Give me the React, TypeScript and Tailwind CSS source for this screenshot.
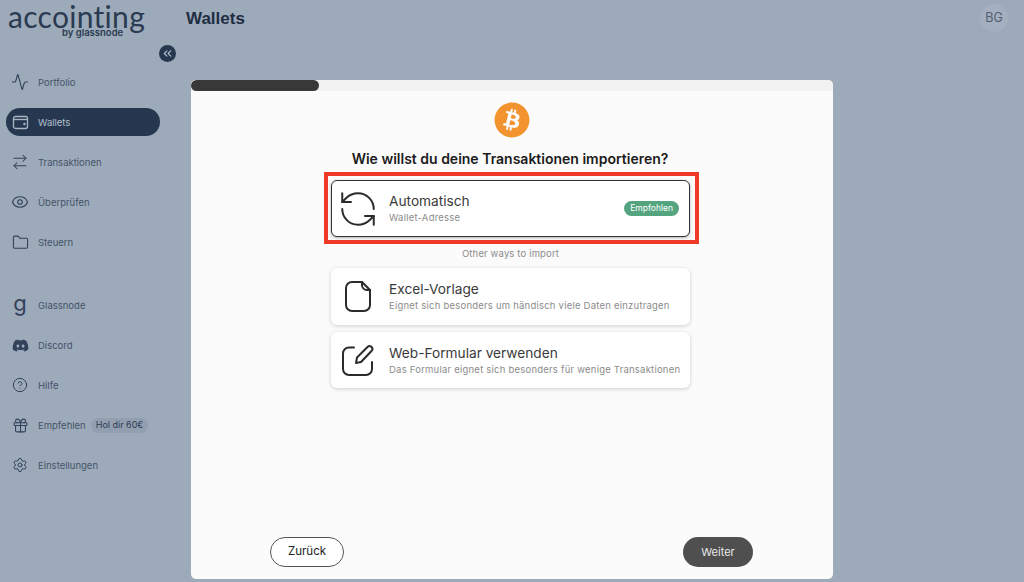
import { Activity, ArrowRightLeft, ChevronsLeft, CircleHelp, Eye, Folder, Gift, RefreshCcw, Settings } from "lucide-react";
import { FaBitcoin, FaDiscord } from "react-icons/fa";
import type { ReactNode } from "react";

function WalletIcon() {
  return (
    <svg width="17" height="17" viewBox="0 0 17 17" fill="none" stroke="currentColor" strokeWidth="1.3">
      <rect x="1.5" y="2.5" width="14" height="12" rx="2" />
      <path d="M1.5 5.5h14" />
      <circle cx="12.5" cy="10" r="0.6" fill="currentColor" />
    </svg>
  );
}

function FileIcon() {
  return (
    <svg width="26" height="31" viewBox="0 0 26 31" fill="none" stroke="currentColor" strokeWidth="2" strokeLinecap="round" strokeLinejoin="round">
      <path d="M7 1h10l8 8v15a6 6 0 0 1-6 6H7a6 6 0 0 1-6-6V7a6 6 0 0 1 6-6z" />
      <path d="M17 1v3a5 5 0 0 0 5 5h3" />
    </svg>
  );
}

function FormIcon() {
  return (
    <svg width="32" height="32" viewBox="0 0 32 32" fill="none" stroke="currentColor" strokeWidth="2" strokeLinecap="round" strokeLinejoin="round">
      <path d="M12 3.500H7a6 6 0 0 0-6 6V25a6 6 0 0 0 6 6h17a6 6 0 0 0 6-6v-7" />
      <path d="M14 19l1-5.500L25.500 3a2.800 2.800 0 0 1 4 4L19 18z" />
    </svg>
  );
}

const topNav = [
  { label: "Portfolio", icon: <Activity size={18} strokeWidth={1.5} /> },
  { label: "Wallets", icon: <WalletIcon />, active: true },
  { label: "Transaktionen", icon: <ArrowRightLeft size={18} strokeWidth={1.4} /> },
  { label: "Überprüfen", icon: <Eye size={18} strokeWidth={1.5} /> },
  { label: "Steuern", icon: <Folder size={17} strokeWidth={1.5} /> },
];

const bottomNav = [
  { label: "Glassnode", icon: <span className="text-[22px] leading-none -mt-[5px]">g</span> },
  { label: "Discord", icon: <FaDiscord size={17} /> },
  { label: "Hilfe", icon: <CircleHelp size={16} strokeWidth={1.5} /> },
  { label: "Empfehlen", icon: <Gift size={17} strokeWidth={1.5} />, badge: "Hol dir 60€" },
  { label: "Einstellungen", icon: <Settings size={16} strokeWidth={1.5} /> },
];

function NavItem({ label, icon, active, badge }: { label: string; icon: ReactNode; active?: boolean; badge?: string }) {
  return (
    <div className={`h-7 flex items-center rounded-full pl-[5px] ${active ? "bg-[#263850] text-[#a9b5c4]" : "text-[#33415a]"}`}>
      <span className="w-[18px] flex justify-center">{icon}</span>
      <span className={`ml-[9px] mt-[2px] text-[9.5px] ${active ? "text-[#b4bfcc]" : "text-[#465369]"}`}>{label}</span>
      {badge && (
        <span className="ml-[5px] h-[15px] px-[5px] flex items-center rounded-full bg-[#929fb1] text-[9px] text-[#2f3d52]">{badge}</span>
      )}
    </div>
  );
}

function Option({ title, text, icon, badge, className }: { title: string; text: string; icon: ReactNode; badge?: string; className?: string }) {
  return (
    <div className={`w-[359px] bg-white rounded-[6px] flex items-center pr-[10px] ${className}`}>
      <span className="w-[32px] flex justify-center text-[#2b2b2b]">{icon}</span>
      <div className="ml-[15px] flex-1 whitespace-nowrap">
        <div className="text-[13.7px] leading-[18px] text-[#3a3a3a]">{title}</div>
        <div className="text-[9.5px] leading-[14px] mt-[1px] text-[#8b8b8b] tracking-[0.22px]">{text}</div>
      </div>
      {badge && (
        <span className="h-[15px] px-[6px] rounded-full bg-[#54a57f] text-white text-[8.5px] flex items-center">{badge}</span>
      )}
    </div>
  );
}

export default function App() {
  return (
    <div className="w-[1024px] h-[582px] overflow-hidden flex bg-[#9caaba] font-['Inter',sans-serif]">
      {/* Sidebar */}
      <aside className="w-[191px] shrink-0 pl-[6px] pr-[31px]">
        <div className="h-[45px] pt-[1px] pl-[2px]">
          <div className="text-[30px] leading-[30px] font-['Lato',sans-serif] text-[#2a3a50] tracking-[0.3px]">accointing</div>
          <div className="-mt-[4px] pl-[54px] text-[9.5px] leading-3 font-semibold text-[#2a3a50]">by glassnode</div>
        </div>
        <div className="flex justify-end h-[17px] -mr-[16px]">
          <span className="w-[17px] h-[17px] rounded-full bg-[#263850] text-[#b4bfcc] flex items-center justify-center">
            <ChevronsLeft size={13} strokeWidth={2} />
          </span>
        </div>
        <nav className="mt-[6px] flex flex-col gap-3">
          {topNav.map((item) => (
            <NavItem key={item.label} {...item} />
          ))}
        </nav>
        <nav className="mt-[35px] flex flex-col gap-3">
          {bottomNav.map((item) => (
            <NavItem key={item.label} {...item} />
          ))}
        </nav>
      </aside>

      {/* Main */}
      <main className="flex-1 flex flex-col min-w-0">
        <header className="h-[80px] shrink-0 flex items-start justify-between pr-[16px]">
          <h1 className="mt-[9px] -ml-[5px] text-[17px] leading-[20px] font-bold text-[#1f2d42] font-['Liberation_Sans',sans-serif]">Wallets</h1>
          <span className="mt-[4px] w-7 h-7 rounded-full bg-[#a4afbf] text-[#536073] text-[12.5px] flex items-center justify-center">BG</span>
        </header>

        <section className="w-[642px] h-[499px] bg-[#fbfbfb] rounded-[5px] overflow-hidden flex flex-col items-center">
          <div className="self-stretch h-[11px] bg-[#f2f2f3] shrink-0">
            <div className="w-[128px] h-[11px] rounded-full bg-[#383838]" />
          </div>
          <FaBitcoin size={36} className="mt-[11px] -ml-[1px] text-[#f2932f]" />
          <h2 className="mt-[11px] -ml-[4px] text-[14px] leading-5 font-semibold text-[#1c1c1c]">Wie willst du deine Transaktionen importieren?</h2>

          <div className="mt-[3px] -ml-[1px] w-[375px] h-[72px] border-[4px] border-[#ee3a26] pl-[3px] pt-[4px]">
            <Option
              title="Automatisch"
              text="Wallet-Adresse"
              badge="Empfohlen"
              icon={<RefreshCcw size={42} strokeWidth={1.15} className="shrink-0" />}
              className="h-[57px] pl-[10px] border-[1.5px] border-[#333] shadow-[0_1px_3px_rgba(0,0,0,0.3)]"
            />
          </div>

          <div className="mt-[3px] -ml-[3px] text-[9.5px] leading-[14px] text-[#8b8b8b] tracking-[0.15px]">Other ways to import</div>

          <div className="mt-[7px] -ml-[3px] flex flex-col gap-[7px]">
            <Option
              title="Excel-Vorlage"
              text="Eignet sich besonders um händisch viele Daten einzutragen"
              icon={<FileIcon />}
              className="h-[57px] pl-[11px] shadow-[0_1px_4px_rgba(0,0,0,0.18)]"
            />
            <Option
              title="Web-Formular verwenden"
              text="Das Formular eignet sich besonders für wenige Transaktionen"
              icon={<FormIcon />}
              className="h-[56px] pl-[11px] shadow-[0_1px_4px_rgba(0,0,0,0.18)]"
            />
          </div>

          <div className="mt-auto mb-[12px] self-stretch flex justify-between pl-[79px] pr-[80px]">
            <button className="w-[74px] h-[30px] rounded-full border border-[#555] text-[11.5px] text-[#222] bg-white">Zurück</button>
            <button className="w-[70px] h-[30px] rounded-full bg-[#4f4f4f] text-[11px] text-[#e8e8e8]">Weiter</button>
          </div>
        </section>
      </main>
    </div>
  );
}
